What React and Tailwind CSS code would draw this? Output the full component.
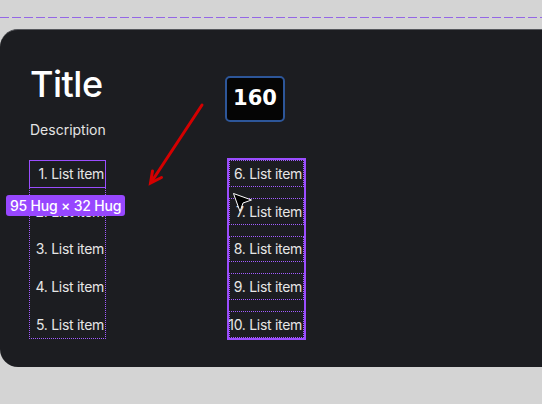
import React from "react";

const font = { fontFamily: "Inter, 'Liberation Sans', sans-serif" };

function Cursor() {
  return (
    <svg
      className="absolute left-[232px] top-[192px]"
      width="24"
      height="24"
      viewBox="0 0 24 24"
    >
      <path
        d="M1.5 1.5 L19.5 8 L11 11 L8 19.5 Z"
        fill="#000"
        stroke="#fff"
        strokeWidth="1"
        strokeLinejoin="round"
      />
    </svg>
  );
}

function RedArrow() {
  return (
    <svg
      className="absolute left-0 top-0 pointer-events-none"
      width="542"
      height="404"
      viewBox="0 0 542 404"
    >
      <g stroke="#d40000" strokeWidth="3" strokeLinecap="round" fill="none">
        <line x1="202" y1="105" x2="152" y2="181" />
        <polyline points="152.5,171 150.5,183 161.5,177.5" strokeLinejoin="miter" />
      </g>
    </svg>
  );
}

export default function App() {
  const left = [1, 2, 3, 4, 5];
  const right = [6, 7, 8, 9, 10];
  return (
    <div className="relative w-[542px] h-[404px] overflow-hidden bg-[#d4d4d4]" style={font}>
      <svg className="absolute left-0 top-[17px]" width="542" height="1">
        <line x1="0" y1="0.5" x2="542" y2="0.5" stroke="#9466e6" strokeWidth="1" strokeDasharray="9 3" />
      </svg>

      <div className="absolute left-0 top-[29px] w-[600px] h-[338px] rounded-[18px] bg-[#1c1d21] border-t border-[#56585d] flex">
        <div className="w-[225px] pl-[29px] flex flex-col">
          <div className="mt-[34px] pl-px text-[36px] leading-[40px] font-medium tracking-[-0.5px] text-white">Title</div>
          <div className="mt-[16px] pl-px text-[14px] leading-[20px] text-[#e4e4e4]">Description</div>
          <div className="mt-[20px] w-[77px] h-[179px] border border-dotted border-[#a25cff] flex flex-col gap-[12px]">
            {left.map((n, i) => (
              <div
                key={n}
                className={
                  "h-[25.6px] flex items-center justify-end pr-px text-[14px] tracking-[-0.3px] text-[#e6e6e6] whitespace-nowrap " +
                  (i === 0 ? "outline outline-1 outline-[#9b4dff]" : "")
                }
              >
                {n}. List item
              </div>
            ))}
          </div>
        </div>

        <div className="flex flex-col items-start pt-[46px]">
          <div className="w-[60px] h-[46px] rounded-[5px] border-2 border-[#2d5699] bg-[#050505] flex items-center justify-center">
            <span
              className="text-[21px] font-bold text-white"
              style={{ fontFamily: "'DejaVu Sans', sans-serif" }}
            >
              160
            </span>
          </div>
          <div className="mt-[36px] ml-[2px] w-[79px] h-[182px] border-2 border-[#9b4dff] flex flex-col gap-[11px]">
            {right.map((n) => (
              <div
                key={n}
                className="h-[27px] border border-dotted border-[#a25cff] flex items-center justify-end pr-px text-[14px] tracking-[-0.3px] text-[#e6e6e6] whitespace-nowrap"
              >
                {n}. List item
              </div>
            ))}
          </div>
        </div>
      </div>

      <div className="absolute left-[6px] top-[195px] h-[21px] px-[4px] rounded-[3px] bg-[#9747ff] text-white text-[14px] leading-[21px] font-medium tracking-[-0.2px] whitespace-nowrap">
        95 Hug × 32 Hug
      </div>

      <RedArrow />
      <Cursor />
    </div>
  );
}
